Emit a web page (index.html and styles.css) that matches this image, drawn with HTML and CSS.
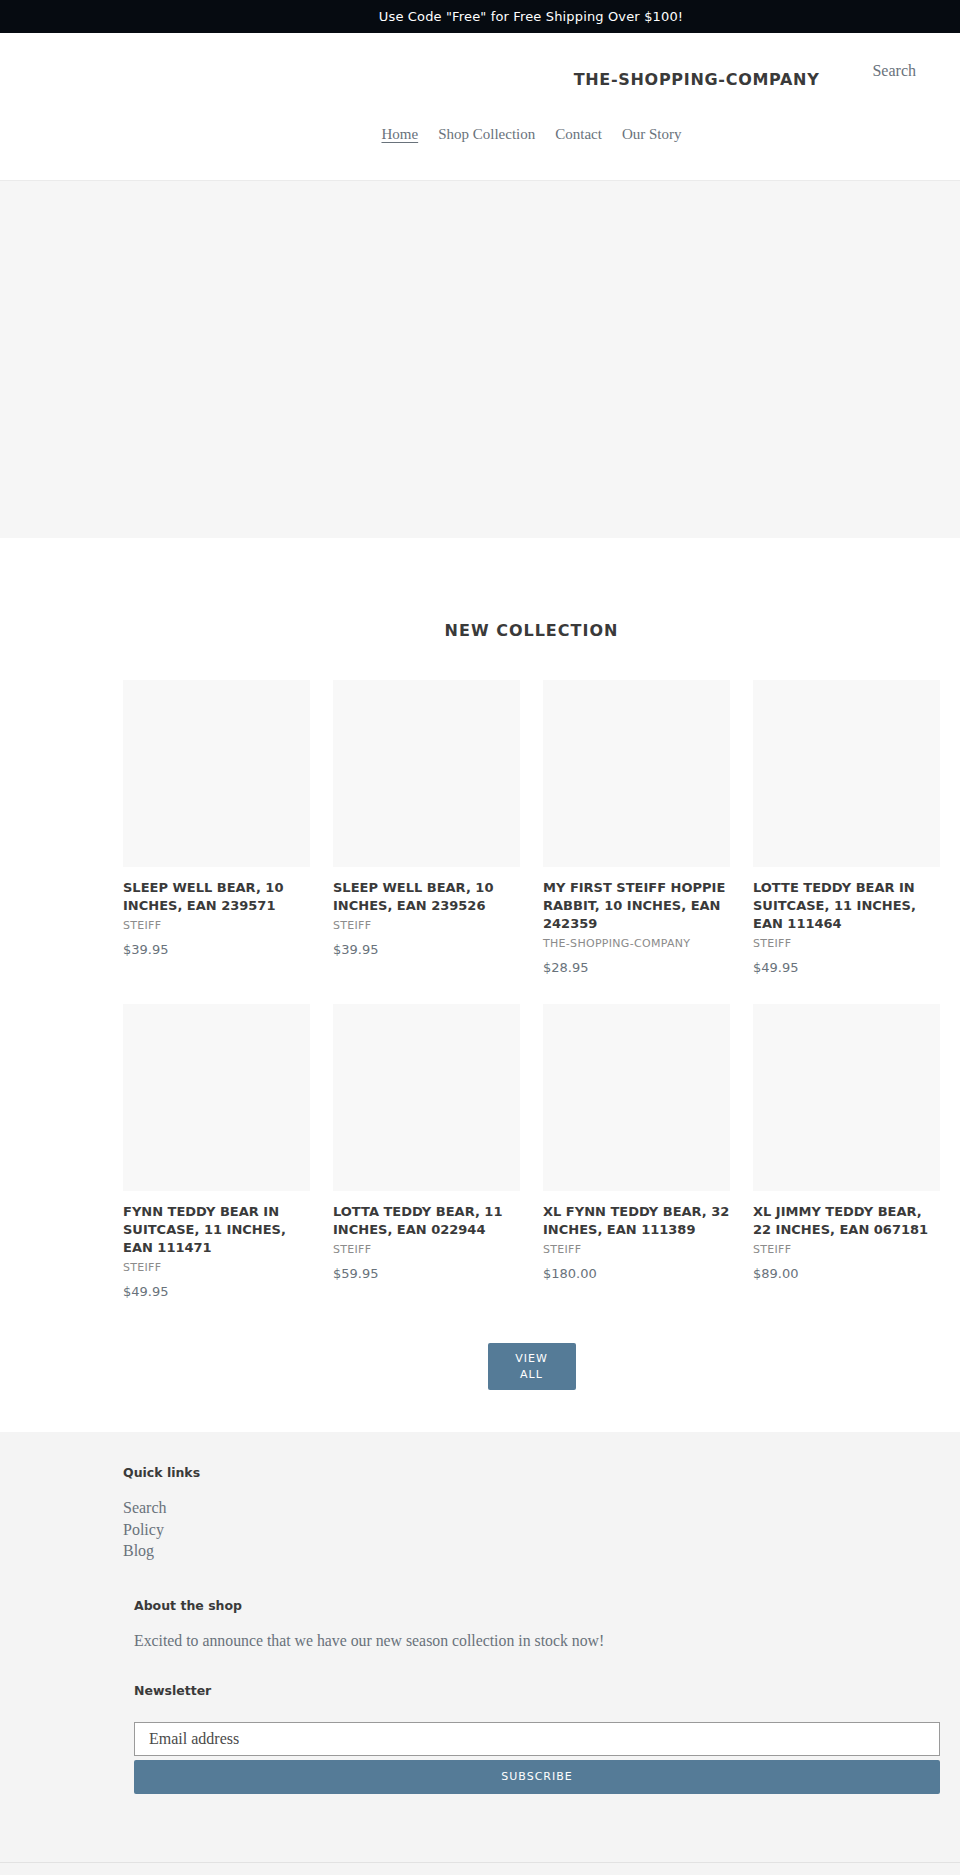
FILE: index.html
```html
<!DOCTYPE html>
<html lang="en">
<head>
    <meta charset="UTF-8">
    <meta name="viewport" content="width=device-width, initial-scale=1.0">
    <title>The-Shopping-Company</title>
    <link rel="stylesheet" href="styles.css">
</head>
<body>

    <div class="announcement">Use Code "Free" for Free Shipping Over $100!</div>

    <header class="site-header">
        <div class="page-width">
            <div class="header-bar">
                <a href="#" class="logo">THE-SHOPPING-COMPANY</a>
                <a href="#" class="header-search">Search</a>
            </div>
            <ul class="site-nav">
                <li><a href="#" class="active">Home</a></li>
                <li><a href="#">Shop Collection</a></li>
                <li><a href="#">Contact</a></li>
                <li><a href="#">Our Story</a></li>
            </ul>
        </div>
    </header>

    <!-- slideshow placeholder -->
    <div class="hero"></div>

    <section class="collection">
        <div class="page-width">
            <h2 class="section-title">New Collection</h2>

            <div class="product-grid">
                <div class="product-card">
                    <div class="product-image"></div>
                    <div class="product-title">Sleep Well Bear, 10 inches, EAN 239571</div>
                    <div class="product-vendor">Steiff</div>
                    <div class="product-price">$39.95</div>
                </div>
                <div class="product-card">
                    <div class="product-image"></div>
                    <div class="product-title">Sleep Well Bear, 10 inches, EAN 239526</div>
                    <div class="product-vendor">Steiff</div>
                    <div class="product-price">$39.95</div>
                </div>
                <div class="product-card">
                    <div class="product-image"></div>
                    <div class="product-title">My First Steiff Hoppie Rabbit, 10 inches, EAN 242359</div>
                    <div class="product-vendor">The-Shopping-Company</div>
                    <div class="product-price">$28.95</div>
                </div>
                <div class="product-card">
                    <div class="product-image"></div>
                    <div class="product-title">Lotte Teddy Bear in Suitcase, 11 inches, EAN 111464</div>
                    <div class="product-vendor">Steiff</div>
                    <div class="product-price">$49.95</div>
                </div>
                <div class="product-card">
                    <div class="product-image"></div>
                    <div class="product-title">Fynn Teddy Bear in Suitcase, 11 inches, EAN 111471</div>
                    <div class="product-vendor">Steiff</div>
                    <div class="product-price">$49.95</div>
                </div>
                <div class="product-card">
                    <div class="product-image"></div>
                    <div class="product-title">Lotta Teddy Bear, 11 inches, EAN 022944</div>
                    <div class="product-vendor">Steiff</div>
                    <div class="product-price">$59.95</div>
                </div>
                <div class="product-card">
                    <div class="product-image"></div>
                    <div class="product-title">XL Fynn Teddy Bear, 32 inches, EAN 111389</div>
                    <div class="product-vendor">Steiff</div>
                    <div class="product-price">$180.00</div>
                </div>
                <div class="product-card">
                    <div class="product-image"></div>
                    <div class="product-title">XL Jimmy Teddy Bear, 22 inches, EAN 067181</div>
                    <div class="product-vendor">Steiff</div>
                    <div class="product-price">$89.00</div>
                </div>
            </div>

            <div class="view-all">
                <a href="#" class="btn btn-small">View all</a>
            </div>
        </div>
    </section>

    <footer class="site-footer">
        <div class="page-width">
            <div class="footer-block">
                <h4 class="footer-title">Quick links</h4>
                <ul class="footer-links">
                    <li><a href="#">Search</a></li>
                    <li><a href="#">Policy</a></li>
                    <li><a href="#">Blog</a></li>
                </ul>
            </div>

            <div class="footer-block footer-block--inset">
                <h4 class="footer-title">About the shop</h4>
                <p class="footer-text">Excited to announce that we have our new season collection in stock now!</p>

                <h4 class="footer-title newsletter-title">Newsletter</h4>
                <form class="newsletter">
                    <input type="email" placeholder="Email address">
                    <button type="submit" class="btn">Subscribe</button>
                </form>
            </div>
        </div>
        <div class="footer-bottom"></div>
    </footer>

</body>
</html>
```

FILE: styles.css
```css
/* General Styles */
* {
    box-sizing: border-box;
}

body {
    margin: 0;
    font-family: "Liberation Serif", serif;
    color: #3d4246;
    background: #fff;
}

a {
    color: inherit;
    text-decoration: none;
}

ul {
    list-style: none;
    margin: 0;
    padding: 0;
}

/* content column sits right of centre */
.page-width {
    width: 817px;
    margin: 0 20px 0 auto;
}

/* Announcement bar */
.announcement {
    height: 33px;
    padding-left: 102px;
    line-height: 33px;
    background: #060b11;
    color: #fff;
    text-align: center;
    font-family: "DejaVu Sans", sans-serif;
    font-size: 13px;
    letter-spacing: 0.15px;
}

/* Header */
.site-header {
    padding: 28px 0 36px;
    border-bottom: 1px solid #ebebeb;
}

.header-bar {
    display: flex;
    justify-content: flex-end;
    align-items: flex-start;
}

.logo {
    margin: 8px 53px 0 0;
    font-family: "DejaVu Sans", sans-serif;
    font-weight: bold;
    font-size: 16px;
    line-height: 22px;
    letter-spacing: 0.7px;
    color: #3a3a3a;
}

.header-search {
    margin-right: 24px;
    font-size: 16px;
    line-height: 20px;
    color: #69727b;
}

.site-nav {
    display: flex;
    justify-content: center;
    margin-top: 33px;
}

.site-nav a {
    display: block;
    padding: 0 10px;
    font-size: 15px;
    line-height: 20px;
    color: #69727b;
}

.site-nav a.active {
    text-decoration: underline;
    text-underline-offset: 3px;
}

/* Slideshow */
.hero {
    height: 357px;
    background: #f6f6f6;
}

/* Featured collection */
.collection {
    padding: 82px 0 42px;
}

.section-title {
    margin: 0 0 38px;
    text-align: center;
    font-family: "DejaVu Sans", sans-serif;
    font-size: 16px;
    line-height: 22px;
    letter-spacing: 1px;
    text-transform: uppercase;
    color: #3a3a3a;
}

.product-grid {
    display: grid;
    grid-template-columns: repeat(4, 187px);
    column-gap: 23px;
    row-gap: 27px;
}

.product-image {
    height: 187px;
    background: #f8f8f8;
}

.product-title {
    margin-top: 12px;
    font-family: "DejaVu Sans", sans-serif;
    font-weight: bold;
    font-size: 13px;
    line-height: 18px;
    text-transform: uppercase;
    color: #3a3a3a;
}

.product-vendor {
    margin-top: 3px;
    font-family: "DejaVu Sans", sans-serif;
    font-size: 11px;
    line-height: 16px;
    letter-spacing: 0.3px;
    text-transform: uppercase;
    color: #8b8b8b;
}

.product-price {
    margin-top: 7px;
    font-family: "DejaVu Sans", sans-serif;
    font-size: 13px;
    line-height: 18px;
    color: #69727b;
}

/* Buttons */
.btn {
    display: block;
    border: none;
    border-radius: 2px;
    background: #557b97;
    color: #fff;
    font-family: "DejaVu Sans", sans-serif;
    font-size: 11px;
    line-height: 16px;
    letter-spacing: 1px;
    text-transform: uppercase;
    text-align: center;
    cursor: pointer;
}

.view-all {
    display: flex;
    justify-content: center;
    margin-top: 42px;
}

.btn-small {
    width: 88px;
    padding: 7.5px 22px;
}

/* Footer */
.site-footer {
    background: #f4f4f4;
    padding-top: 32px;
}

.footer-title {
    margin: 0 0 15px;
    font-family: "DejaVu Sans", sans-serif;
    font-size: 12.5px;
    line-height: 18px;
    color: #3a3a3a;
}

.footer-links {
    margin-bottom: 35px;
}

.footer-links a,
.footer-text {
    font-size: 16px;
    line-height: 21.5px;
    color: #69727b;
}

.footer-links a {
    display: block;
}

.footer-block--inset {
    padding: 0 0 68px 11px;
}

.footer-text {
    margin: 0 0 31px;
    font-size: 15.8px;
}

.newsletter-title {
    margin-bottom: 21.5px;
}

.newsletter input {
    display: block;
    width: 100%;
    height: 34px;
    padding: 0 14px;
    border: 1px solid #9a9a9a;
    background: #fff;
    font-family: "Liberation Serif", serif;
    font-size: 16px;
    color: #3d4246;
}

.newsletter input::placeholder {
    color: #4a4a4a;
}

.newsletter .btn {
    width: 100%;
    height: 34px;
    margin-top: 4px;
}

.footer-bottom {
    height: 40px;
    border-top: 1px solid #e2e2e2;
}
```
